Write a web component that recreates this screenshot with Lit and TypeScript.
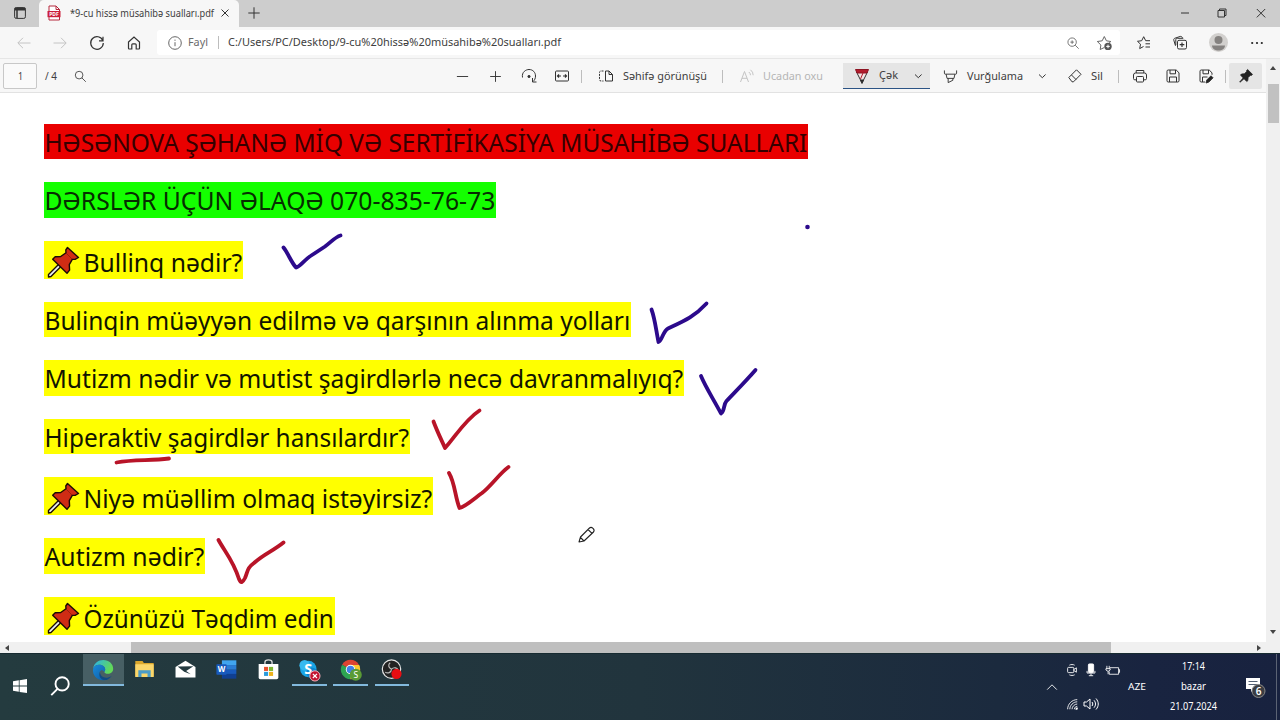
import { LitElement, html, svg, css } from "lit";
import { customElement, property } from "lit/decorators.js";

const ICONS: Record<string, any> = {
  tabs: svg`<rect x="2.6" y="2.6" width="10.8" height="10.8" rx="1.6"/><path d="M2.6 3.6h10.8M2.6 4.8h10.8M5 5v8" stroke-width="1.5"/>`,
  pdf: svg`<path d="M3 1h7l3.5 3.5V15H3z" fill="#fff" stroke="#b5283c"/><path d="M10 1v3.5h3.5" stroke="#b5283c"/><rect x="1.5" y="6" width="13" height="6.2" fill="#cb1f3b" stroke="none"/><text x="8" y="11" font-size="5" font-weight="700" text-anchor="middle" fill="#fff" stroke="none">PDF</text>`,
  close: svg`<path d="M4.5 4.5l7 7M11.5 4.5l-7 7"/>`,
  winclose: svg`<path d="M3.8 4l8.4 8.4M12.2 4l-8.4 8.4"/>`,
  restore: svg`<path d="M4 5.5h6.5V12H4zM5.5 5.5V4H12v6.5h-1.5"/>`,
  minus: svg`<path d="M2 8h12"/>`,
  winmin: svg`<path d="M4 8h8"/>`,
  plus: svg`<path d="M2.3 8h11.4M8 2.3v11.4"/>`,
  back: svg`<path d="M14.5 8H2M7 2.8L1.8 8 7 13.2"/>`,
  forward: svg`<path d="M1.5 8H14M9 2.8L14.2 8 9 13.2"/>`,
  reload: svg`<path d="M13.8 5.5A6.3 6.3 0 1 0 14.3 8M14 1.8v4h-4" stroke-width="1.2"/>`,
  home: svg`<path d="M2.5 7L8 2l5.5 5v6.3a.7.7 0 0 1-.7.7h-2.6V9.8a1 1 0 0 0-1-1H6.8a1 1 0 0 0-1 1V14H3.2a.7.7 0 0 1-.7-.7z" stroke-width="1.2"/>`,
  info: svg`<circle cx="8" cy="8" r="6.3"/><path d="M8 7.2v4M8 4.6v1.2"/>`,
  zoom: svg`<circle cx="7" cy="7" r="4.8"/><path d="M10.5 10.5L14.5 14.5M7 5v4M5 7h4"/>`,
  staradd: svg`<path d="M8.3 12.500L4.2 14.500l.7-4.500L1.3 6.500l4.900-.7L8.300 1.500l2.100 4.300 4.400.7-2.100 2"/><circle cx="12" cy="11.400" r="3.700" fill="#555" stroke="none"/><path d="M10.200 11.400h3.600M12 9.600v3.600" stroke="#fff"/>`,
  favorites: svg`<path d="M7.500 11.500L3.700 13.600l.8-4.400L1.500 6.300l4.200-.6 2-4 2 4H14M9.500 8.800H14M9.500 12H14"/>`,
  collections: svg`<path d="M3.500 10.800L1.800 5.200C1.500 4.400 2 3.600 2.700 3.300L8 1.500c1-.3 1.800 0 2.200.9l.2.600M3.800 10V4.800c0-.8.6-1.500 1.500-1.500h6"/><rect x="5.500" y="5.300" width="9" height="8.700" rx="1.500"/><path d="M7.700 9.700h4.600M10 7.400v4.600" stroke-width="1.200"/>`,
  dots: svg`<g stroke="none" fill="#222"><circle cx="3.200" cy="8" r="1.100"/><circle cx="8" cy="8" r="1.100"/><circle cx="12.800" cy="8" r="1.100"/></g>`,
  search: svg`<circle cx="6.300" cy="6.300" r="4.700"/><path d="M9.700 9.700L14.500 14.500"/>`,
  rotate: svg`<path d="M1.500 9.500C.5 4 5 1.500 8 1.500c4 0 6.500 3 6.500 6.500 0 2.500-1 4.300-2.500 5.500M11.500 10v4h4"/><circle cx="8" cy="8.500" r="1.100" fill="#333"/>`,
  fit: svg`<rect x="1.500" y="3" width="13" height="10" rx="1"/><path d="M3.500 8h3.500M9 8h3.500M5 6.500L3.500 8 5 9.500M11 6.500L12.500 8 11 9.500" stroke-width="1.200"/>`,
  pages: svg`<path d="M5.500 3H3a1.500 1.500 0 0 0-1.500 1.500v7A1.500 1.500 0 0 0 3 13h2.500" stroke-dasharray="2 1"/><path d="M7.500 3h3.500l3.500 3.500V13h-7zM11 3v3.500h3.500"/>`,
  read: svg`<path d="M1.500 14L5.500 3.500 9.500 14M3 10.300h5M9.800 4a4 4 0 0 1 1.700 3.200M11.500 1.800a7 7 0 0 1 2.700 5.400"/>`,
  pen: svg`<path d="M2.500 4l5.500 11 5.500-11z" fill="#f3e3e3"/><path d="M1.500 1.500h13L13 5H3z" fill="#b31b2c" stroke="#8d1423"/><path d="M9 5l-2.500 6" stroke="#b31b2c"/><path d="M6.500 12h3L8 15.500z" fill="#222"/>`,
  marker: svg`<path d="M1.500 1.500v3a1 1 0 0 0 1 1h11a1 1 0 0 0 1-1v-3M3.300 5.500l1 4.500h7.400l1-4.500M5.500 10v4.500l5-2.500v-2"/>`,
  chevron: svg`<path d="M1 6.500l3.300 3.200 3.300-3.200"/>`,
  eraser: svg`<path d="M1.800 9.500L9.500 1.800 14 6.300l-7.500 7.500H5zM4.500 7l4.600 4.600"/>`,
  print: svg`<path d="M4.200 5V2.500h7.600V5M4.500 11.800H2.800a1.300 1.300 0 0 1-1.300-1.300V7A2 2 0 0 1 3.500 5h9a2 2 0 0 1 2 2v3.500a1.300 1.300 0 0 1-1.300 1.300h-1.700"/><rect x="4.500" y="8.500" width="7" height="5.500" rx=".8"/>`,
  save: svg`<path d="M3.200 2h8L14 4.800v8a1.200 1.200 0 0 1-1.200 1.200H3.200A1.200 1.200 0 0 1 2 12.800V3.200A1.200 1.200 0 0 1 3.200 2zM5 2v3.800h5.500V2M4.500 14V9h7v5"/>`,
  saveas: svg`<path d="M7 14H3.200A1.200 1.200 0 0 1 2 12.800V3.200A1.200 1.200 0 0 1 3.200 2h8L14 4.800v2M5 2v3.800h5.500V2M4.500 14V9h5"/><path d="M8 15l.8-3L13 7.800l2 2-4.200 4.300z" fill="#222"/>`,
  pin: svg`<path d="M9.600 1.500l4.900 4.900-1.200 1-.8-.2-2.400 2.400-.3 3-1 .9L6 10.700 2 14.300l-.3-.3 3.500-4.100L2.500 7l1-1 3-.2L8.800 3.300l-.2-.8z" fill="#222" stroke="#222" stroke-width=".8"/>`,
  windows: svg`<g fill="#fff" stroke="none"><path d="M1 3.200l5.800-.9v5.300H1zM7.600 2.200L15 1v6.600H7.600zM1 8.400h5.800v5.300L1 12.800zM7.600 8.400H15V15l-7.400-1.100z"/></g>`,
  find: svg`<circle cx="9.700" cy="6.300" r="5.300" stroke="#fff" stroke-width="1.500"/><path d="M6 10.300L1 15.300" stroke="#fff" stroke-width="1.600"/>`,
  edge: svg`<defs><linearGradient id="ea" x1="0" y1="0" x2="1" y2=".4"><stop offset="0" stop-color="#2ab2ee"/><stop offset="1" stop-color="#62d957"/></linearGradient><linearGradient id="eb" x1="0" y1="0" x2="1" y2="1"><stop offset="0" stop-color="#1a8ada"/><stop offset="1" stop-color="#0c5aa0"/></linearGradient></defs>
    <g stroke="none"><path d="M.8 7C1.600 3 4.500.8 8.200.8c4.200 0 7.200 3 7.200 6.200 0 2.300-1.800 3.700-3.800 3.700-1.500 0-2.600-.7-2.600-1.300 0-.5.6-.7.600-1.800C9.600 5.600 7.500 4.200 5 4.200 3 4.200 1.600 5.300.8 7z" fill="url(#ea)"/><path d="M.8 7c.8-1.700 2.400-2.800 4.400-2.800 2.400 0 4.400 1.500 4.400 3.400 0 1-.5 1.300-.6 1.800C7 6.500 4.500 9 6 12c1 2.200 3.500 3.200 6 2.300C10.800 15 9.600 15.400 8 15.400 3.400 15.400.1 11.500.8 7z" fill="url(#eb)"/><path d="M5.800 9.500c0 4 5 5.500 8.500 2.600-1.600 2.900-4.600 3.600-6.300 3C5.500 14.200 4.800 11.500 5.800 9.500z" fill="#124a83"/></g>`,
  explorer: svg`<g stroke="none"><path d="M1 1.600h5.500l1 1.400H15v10.500H1z" fill="#dba72c"/><path d="M1 4h14v9.700H1z" fill="#fbd76b"/><path d="M3.300 8.600h9.400v5.100h-2.400v-2.600H5.700v2.600H3.300z" fill="#4a9cc9"/></g>`,
  mail: svg`<g stroke="none"><path d="M.4 6L8 1.400 15.600 6v8H.4z" fill="#fff"/><path d="M2 5.800l12-.2-5.500 3.500 3.500 2.500-5-1.900z" fill="#243a40"/></g>`,
  word: svg`<g stroke="none"><path d="M4.500 1h11v3.600h-11z" fill="#41a5ee"/><path d="M4.500 4.600h11v3.600h-11z" fill="#2b7cd3"/><path d="M4.500 8.200h11v3.200h-11z" fill="#185abd"/><path d="M4.500 11.400h11V15h-11z" fill="#103f91"/><rect x=".3" y="4" width="7.800" height="8" rx=".6" fill="#185abd"/><text x="4.200" y="10.200" font-size="6" font-weight="700" fill="#fff" text-anchor="middle">W</text></g>`,
  store: svg`<path d="M5.300 4V2.300C5.300 1.200 6 .6 8 .6s2.700.6 2.700 1.700V4" stroke="#ddd"/><g stroke="none"><path d="M.5 3.800h15v10.300a1.300 1.300 0 0 1-1.300 1.300H1.800A1.300 1.300 0 0 1 .5 14.100z" fill="#fff"/><path d="M4.600 6h3.100v3.100H4.600z" fill="#e8502c"/><path d="M8.400 6h3.100v3.100H8.400z" fill="#7db530"/><path d="M4.600 9.800h3.100v3.100H4.600z" fill="#2a9bdc"/><path d="M8.400 9.800h3.100v3.100H8.400z" fill="#eeb31d"/></g>`,
  skype: svg`<g stroke="none"><circle cx="7.500" cy="7.300" r="6" fill="#19a4e6"/><circle cx="4.800" cy="4.500" r="3.800" fill="#36b9f0"/><circle cx="10" cy="10" r="3.900" fill="#0d86d0"/><text x="7.500" y="11" font-size="10.500" font-weight="700" fill="#fff" text-anchor="middle">S</text><circle cx="12.300" cy="12.300" r="3.900" fill="#c3122f"/></g><circle cx="12.300" cy="12.300" r="3.700" stroke="#f0d5d9" stroke-width=".6"/><path d="M10.800 10.800l3 3M13.800 10.800l-3 3" stroke="#fff" stroke-width=".9"/>`,
  chrome: svg`<g stroke="none"><path d="M8 8L1.600 4.300A7.400 7.400 0 0 1 14.400 4.300z" fill="#dd4332"/><path d="M8 8l0 7.400A7.400 7.400 0 0 1 1.600 4.300z" fill="#2da452"/><path d="M8 8l6.400-3.700A7.400 7.400 0 0 1 8 15.400z" fill="#fbc92f"/><path d="M8 4.500h6.500L15 6H8z" fill="#fbc92f"/><circle cx="8" cy="8" r="3.600" fill="#fff"/><circle cx="8" cy="8" r="2.900" fill="#4180e8"/><circle cx="12" cy="12" r="4.600" fill="#5a9b35"/><text x="12" y="14.300" font-size="6.500" fill="#fff" text-anchor="middle">S</text></g>`,
  obs: svg`<circle cx="8" cy="7.700" r="7" fill="#222" stroke="#e5e5e5" stroke-width=".9"/><path d="M8 7.700C5.500 7 5.300 4 7 2.800M8 7.700c2-2 4.600-.8 5 1M8 7.700C8 10.500 5 11.300 3.200 10" stroke="#bbb" stroke-width=".9"/><circle cx="11.800" cy="11.300" r="3.900" fill="#e80d12" stroke="none"/>`,
  caret: svg`<path d="M2.500 11L8 5.500l5.500 5.500"/>`,
  meet: svg`<rect x="3" y="5" width="7" height="6" rx="1"/><path d="M10 7.500l3-2v5l-3-2M5 2.500c1.500-1 4.500-1 6 0M5 13.500c1.500 1 4.500 1 6 0"/>`,
  mic: svg`<rect x="5" y="1" width="6" height="10" rx="1.200" fill="#fff"/><path d="M3.500 9v2.500h9V9M8 12v2.500M5.500 14.500h5"/>`,
  battery: svg`<path d="M5 5h9.500v7H4.500V9M14.500 7h1v3h-1M2 3v3.500M4.500 3v3.500M1 6h4.500v1.500L3.300 9 1 7.500zM3.300 9v3" stroke-width=".9"/>`,
  wifi: svg`<path d="M3 14C3 8 8 3 14 3M5.500 14c0-4.500 4-8.500 8.500-8.500M8 14c0-3 3-6 6-6M10.700 14c0-2 1.600-3.300 3.300-3.300"/><path d="M12.300 14c0-1 .7-1.700 1.700-1.700V14z" fill="#fff"/>`,
  sound: svg`<path d="M1 6h2.500L7 3v10l-3.500-3H1zM9 6c1 1.300 1 2.700 0 4M11 4.300c2 2.300 2 5.100 0 7.400M13 2.500c3 3.500 3 7.500 0 11"/>`,
};

function icon(name: string, size = 16) {
  return html`<svg class="icon" width=${size} height=${size} viewBox="0 0 16 16">${ICONS[name]}</svg>`;
}

// single line of text stretched to a known advance width
function label(text: string, width: number, size: number) {
  const h = Math.round(size * 1.5);
  return html`<svg class="label" width=${width} height=${h}>
    <text x="0" y=${size * 1.1} font-size=${size} textLength=${width} lengthAdjust="spacingAndGlyphs">${text}</text>
  </svg>`;
}

@customElement("doc-line")
export class DocLine extends LitElement {
  @property() text = "";
  @property() color = "yellow";
  @property({ type: Number }) width = 0;
  @property({ type: Boolean }) pushpin = false;

  static styles = css`
    :host {
      display: block;
      font-family: "Noto Sans", sans-serif;
    }

    .mark {
      display: flex;
      height: 35.3px;
    }

    .pinned {
      height: 38.6px;
    }

    .yellow {
      background: #ffff00;
      fill: #111400;
    }

    .red {
      background: #e90000;
      fill: #350000;
    }

    .green {
      background: #14ff00;
      fill: #062e00;
    }

    svg {
      flex: none;
      overflow: visible;
    }
  `;

  render() {
    const left = this.pushpin ? 39.5 : 0.5;
    const base = this.pushpin ? 31 : 27.5;
    return html`
      <div class="mark ${this.color} ${this.pushpin ? "pinned" : ""}" style="width: ${this.width}px">
        <svg width=${this.width} height="35">
          ${this.pushpin ? svg`
            <g stroke="#1c0b05" stroke-linejoin="round">
              <path d="M15 23L4.500 33.500v2.500L7 35.500 17.500 25z" fill="#e6eef0" stroke-width="1.400"/>
              <path d="M23.500 6.500l11 10-3 1.700-3.200.2-3 5.200.3 5.500-2.600 3.200L8.700 18.200l2.500-2.500 5.500-.2 5.300-3.800-.2-2.700z" fill="#d02c14" stroke-width="1.400"/>
              <path d="M22 12l6 6" stroke="#8d1c0d" stroke-width=".8"/>
            </g>` : ""}
          <text x=${left} y=${base} font-size="25.2" textLength=${this.width - left - 1} lengthAdjust="spacingAndGlyphs">${this.text}</text>
        </svg>
      </div>
    `;
  }
}

@customElement("app-root")
export class AppRoot extends LitElement {

  static styles = css`
    :host {
      display: flex;
      flex-direction: column;
      width: 1280px;
      height: 720px;
      overflow: hidden;
      background: #fff;
      font-family: "Noto Sans", sans-serif;
      color: #333;
    }

    .icon {
      display: block;
      flex: none;
      overflow: visible;
      fill: none;
      stroke: #333;
      stroke-width: 1;
    }

    .label {
      display: block;
      flex: none;
      overflow: visible;
      fill: #404040;
    }

    .tabstrip {
      flex: none;
      height: 27px;
      box-sizing: border-box;
      background: #cdcdcd;
      display: grid;
      grid-template-columns: 39px 200px 938px 37px 39px 26px;
      align-items: center;
    }

    .tabstrip > .icon {
      margin-bottom: 2px;
    }

    .tabstrip > :first-child {
      margin-left: 12px;
    }

    .tab {
      align-self: stretch;
      background: #f7f7f7;
      border-radius: 5px 5px 0 0;
      display: grid;
      grid-template-columns: 24px 147px 16px;
      padding: 0 0 1px 7px;
      align-items: center;
    }

    .newtab {
      padding: 0 0 2px 7px;
    }

    .address {
      flex: none;
      height: 31px;
      background: #f7f7f7;
      border-bottom: 1px solid #e6e6e6;
      display: grid;
      grid-template-columns: 36px 37px 37px 31px 979px 36px 34px 43px 16px;
      align-items: center;
    }

    .cell {
      padding-left: 16px;
    }

    .faint .icon {
      stroke: #c4c4c4;
    }

    .faint .label {
      fill: #b5b5b5;
    }

    .omnibox {
      width: 963px;
      height: 25px;
      background: #fff;
      border-radius: 3px;
      display: grid;
      grid-template-columns: 21px 30px 10px 838px 30px 16px;
      padding-left: 10px;
      box-sizing: border-box;
      align-items: center;
    }

    .omnibox .icon {
      stroke: #666;
    }

    .grey .label {
      fill: #6b6b6b;
    }

    .avatar {
      width: 19px;
      height: 19px;
      margin-left: 19px;
    }

    .viewer {
      flex: none;
      height: 594px;
      display: flex;
      position: relative;
    }

    .content {
      width: 1266px;
      display: flex;
      flex-direction: column;
    }

    .toolbar {
      flex: none;
      height: 34px;
      box-sizing: border-box;
      background: #f7f7f7;
      border-bottom: 1px solid #e2e2e2;
      display: grid;
      padding: 1px 0 0 3px;
      grid-template-columns:
        42px 29px 381px 33px 33px 33px 27px 17px 25px 99px 17px 24px 80px
        100px 24px 71px 29px 24px 27px 14px 33px 33px 27px 4px 33px;
      align-items: center;
    }

    .pagebox {
      width: 34px;
      height: 26px;
      box-sizing: border-box;
      border: 1px solid #c8c8c8;
      border-radius: 2px;
      background: #fafafa;
      display: flex;
      align-items: center;
      justify-content: center;
    }

    .sep {
      width: 1px;
      height: 13px;
      background: #bdbdbd;
    }

    .draw {
      width: 87px;
      height: 26px;
      box-sizing: border-box;
      background: #e5e5e5;
      border-bottom: 1.5px solid #2b5384;
      display: grid;
      grid-template-columns: 25px 35px 8px;
      padding-left: 11px;
      align-items: center;
    }

    .pinbox {
      width: 33px;
      height: 26px;
      background: #e5e5e5;
      border-radius: 2px;
      display: flex;
      align-items: center;
      justify-content: center;
    }

    .page {
      flex: 1;
      overflow: hidden;
      padding: 31px 0 0 44px;
      box-sizing: border-box;
      display: flex;
      flex-direction: column;
      gap: 22.97px;
      background: #fff;
    }

    .ink {
      position: absolute;
      left: 0;
      top: 34px;
      fill: none;
      stroke-width: 3.8;
      stroke-linecap: round;
      stroke-linejoin: round;
    }

    .blue {
      stroke: #2c0a8c;
    }

    .crimson {
      stroke: #b81428;
    }

    .hbar {
      flex: none;
      height: 11px;
      background: #f0f0f0;
      display: flex;
      align-items: center;
      justify-content: space-between;
      padding: 0 5px;
    }

    .hthumb {
      width: 980px;
      height: 11px;
      margin-left: -24px;
      background: #bfbfbf;
    }

    .vbar {
      width: 14px;
      background: #f0f0f0;
      display: flex;
      flex-direction: column;
      align-items: center;
      box-sizing: border-box;
      padding-top: 7px;
    }

    .vthumb {
      width: 11px;
      height: 39px;
      margin: 14px 0 507px;
      background: #c1c1c1;
    }

    .taskbar {
      flex: none;
      height: 67px;
      background: linear-gradient(90deg, #243b3f 0%, #21343d 50%, #1b2a3e 78%, #192440 90%, #18223f 100%);
      border-top: 1px solid #172b31;
      box-sizing: border-box;
      display: flex;
    }

    .taskbar .icon {
      stroke: #fff;
    }

    .taskbar .label {
      fill: #fff;
    }

    .start {
      width: 82.5px;
      padding: 0 13px 2px 12px;
      box-sizing: border-box;
      display: flex;
      align-items: center;
      justify-content: space-between;
    }

    .app {
      width: 41.25px;
      height: 32px;
      box-sizing: border-box;
      display: flex;
      justify-content: center;
      padding-top: 5px;
    }

    .open {
      border-bottom: 2px solid #82b9dd;
      width: 34.5px;
      margin: 0 3.375px;
    }

    .current {
      width: 41.25px;
      margin: 0;
      background: #475f64;
    }

    .tray {
      margin-left: auto;
      display: grid;
      grid-template-columns: 20px 63px 41px 75px 32px;
      align-items: center;
      border-right: 1px solid #5b6374;
      margin-right: 3px;
    }

    .tray > .icon,
    .tray > .label {
      margin-bottom: 1px;
    }

    .status {
      display: grid;
      grid-template-columns: 13px 26px 17px;
      row-gap: 18px;
      justify-items: center;
      align-items: center;
    }

    .clock {
      display: flex;
      flex-direction: column;
      align-items: center;
      gap: 5px;
      width: 48px;
      padding-bottom: 1px;
    }
  `;

  renderTabs() {
    return html`
      <div class="tabstrip">
        ${icon("tabs")}
        <div class="tab">${icon("pdf")}${label("*9-cu hissə müsahibə sualları.pdf", 144, 10.5)}${icon("close")}</div>
        <div class="newtab">${icon("plus")}</div>
        ${icon("winmin")}${icon("restore")}${icon("winclose")}
      </div>
    `;
  }

  renderAddress() {
    return html`
      <div class="address">
        <div class="cell faint">${icon("back")}</div>
        <div class="cell faint">${icon("forward")}</div>
        <div class="cell">${icon("reload")}</div>
        <div class="cell">${icon("home")}</div>
        <div class="cell">
          <div class="omnibox">
            ${icon("info")}
            <div class="grey">${label("Fayl", 20, 11)}</div>
            <span class="sep"></span>
            ${label("C:/Users/PC/Desktop/9-cu%20hissə%20müsahibə%20sualları.pdf", 333, 11)}
            ${icon("zoom", 14)}${icon("staradd")}
          </div>
        </div>
        <div class="cell">${icon("favorites")}</div>
        <div class="cell">${icon("collections")}</div>
        <svg class="avatar" viewBox="0 0 19 19">
          <circle cx="9.5" cy="9.5" r="9.5" fill="#d2d0ce"/>
          <circle cx="9.5" cy="7" r="4" fill="#858280"/>
          <path d="M3 12.500h13c0 3-3 5-6.500 5S3 15.500 3 12.500z" fill="#858280"/>
        </svg>
        <div class="cell">${icon("dots")}</div>
      </div>
    `;
  }

  renderToolbar() {
    return html`
      <div class="toolbar">
        <div class="pagebox">${label("1", 5, 10)}</div>
        ${label("/ 4", 12, 10)}
        ${icon("search", 13)}
        ${icon("minus", 15)}${icon("plus", 15)}${icon("rotate")}${icon("fit")}
        <span class="sep"></span>
        ${icon("pages")}${label("Səhifə görünüşü", 84, 11.3)}
        <span class="sep"></span>
        <div class="faint">${icon("read")}</div>
        <div class="faint">${label("Ucadan oxu", 60, 11.3)}</div>
        <div class="draw">${icon("pen")}${label("Çək", 19, 11.3)}${icon("chevron")}</div>
        ${icon("marker", 15)}${label("Vurğulama", 56, 11.3)}${icon("chevron")}
        ${icon("eraser")}${label("Sil", 12, 11.3)}
        <span class="sep"></span>
        ${icon("print")}${icon("save")}${icon("saveas")}
        <span class="sep"></span>
        <div class="pinbox">${icon("pin")}</div>
      </div>
    `;
  }

  renderPage() {
    return html`
      <div class="page">
        <doc-line color="red" width="764.4" text="HƏSƏNOVA ŞƏHANƏ MİQ VƏ SERTİFİKASİYA MÜSAHİBƏ SUALLARI"></doc-line>
        <doc-line color="green" width="452.3" text="DƏRSLƏR ÜÇÜN ƏLAQƏ 070-835-76-73"></doc-line>
        <doc-line pushpin width="199.3" text="Bullinq nədir?"></doc-line>
        <doc-line width="587.3" text="Bulinqin müəyyən edilmə və qarşının alınma yolları"></doc-line>
        <doc-line width="640.3" text="Mutizm nədir və mutist şagirdlərlə necə davranmalıyıq?"></doc-line>
        <doc-line width="366" text="Hiperaktiv şagirdlər hansılardır?"></doc-line>
        <doc-line pushpin width="389.3" text="Niyə müəllim olmaq istəyirsiz?"></doc-line>
        <doc-line width="161.3" text="Autizm nədir?"></doc-line>
        <doc-line pushpin width="290.7" text="Özünüzü Təqdim edin"></doc-line>
      </div>
      <svg class="ink" width="1266" height="548" viewBox="0 93 1266 548">
        <g class="blue">
          <path d="M283.500 247.500C288 253 291 262 296 267.500C299 268 304 260 312 255L325 246.500C330 243 335 237 340.500 235.500"/>
          <path d="M651.500 309.500C655 319 656 330 658.500 342C662 341 663 331 668 328.500C684 321 694 317 706.500 303.500"/>
          <path d="M701 376C706 388 714 400 721 413.500C725 411 723 405 726.500 401C736 391 746 381 755.500 370"/>
          <circle cx="807.500" cy="227" r="2.300" fill="#2c0a8c" stroke="none"/>
        </g>
        <g class="crimson">
          <path d="M433.500 421.500C437 431 441 439 445 448C455 437 465 420 479.500 410.500"/>
          <path d="M449 473C455 483 455 497 459.500 508C465 507 475 498 482 493C491 486 500 473 508.500 467"/>
          <path d="M218.500 540C225 552 233 560 239 579C241 584 243 582 245 578C248 571 247 568 254 563C264 554 273 551 283.500 542.500"/>
          <path d="M116.500 462.500C134 459 150 461 169 458.500"/>
        </g>
        <path d="M579 542l1.500-5 9-9c2-2 6 1.500 4 4l-9.500 9zM588 529.500l4 3.800M580.500 537.500l3.500 3.500" stroke="#222" stroke-width="1.100"/>
      </svg>
    `;
  }

  renderTray() {
    return html`
      <div class="tray">
        ${icon("caret", 14)}
        <div class="status">
          ${icon("meet", 14)}${icon("mic", 14)}${icon("battery", 15)}
          ${icon("wifi", 14)}${icon("sound")}
        </div>
        ${label("AZE", 18, 9.8)}
        <div class="clock">
          ${label("17:14", 23, 10)}${label("bazar", 25, 10)}${label("21.07.2024", 47, 10)}
        </div>
        <svg width="24" height="24" viewBox="0 0 24 24">
          <path d="M2 3h14v11h-6l-3 3v-3H2z" fill="#fff"/>
          <path d="M4.500 6.500h9M4.500 9.500h9" stroke="#536073"/>
          <circle cx="14.500" cy="16" r="6.500" fill="#3b3d42" stroke="#888"/>
          <text x="14.500" y="19.500" font-size="10" font-weight="600" text-anchor="middle" fill="#fff">6</text>
        </svg>
      </div>
    `;
  }

  render() {
    return html`
      ${this.renderTabs()}
      ${this.renderAddress()}
      <div class="viewer">
        <div class="content">
          ${this.renderToolbar()}
          ${this.renderPage()}
          <div class="hbar">
            <svg width="4" height="6"><path d="M4 0v6L0 3z" fill="#444"/></svg>
            <div class="hthumb"></div>
            <svg width="4" height="6"><path d="M0 0v6l4-3z" fill="#444"/></svg>
          </div>
        </div>
        <div class="vbar">
          <svg width="6" height="4"><path d="M0 4h6L3 0z" fill="#444"/></svg>
          <div class="vthumb"></div>
          <svg width="6" height="4"><path d="M0 0h6L3 4z" fill="#444"/></svg>
        </div>
      </div>
      <div class="taskbar">
        <div class="start">${icon("windows")}${icon("find", 20)}</div>
        <div class="app open current">${icon("edge", 22)}</div>
        <div class="app">${icon("explorer", 21)}</div>
        <div class="app">${icon("mail", 21)}</div>
        <div class="app">${icon("word", 21)}</div>
        <div class="app">${icon("store", 21)}</div>
        <div class="app open">${icon("skype", 22)}</div>
        <div class="app open">${icon("chrome", 21)}</div>
        <div class="app open">${icon("obs", 21)}</div>
        ${this.renderTray()}
      </div>
    `;
  }
}
